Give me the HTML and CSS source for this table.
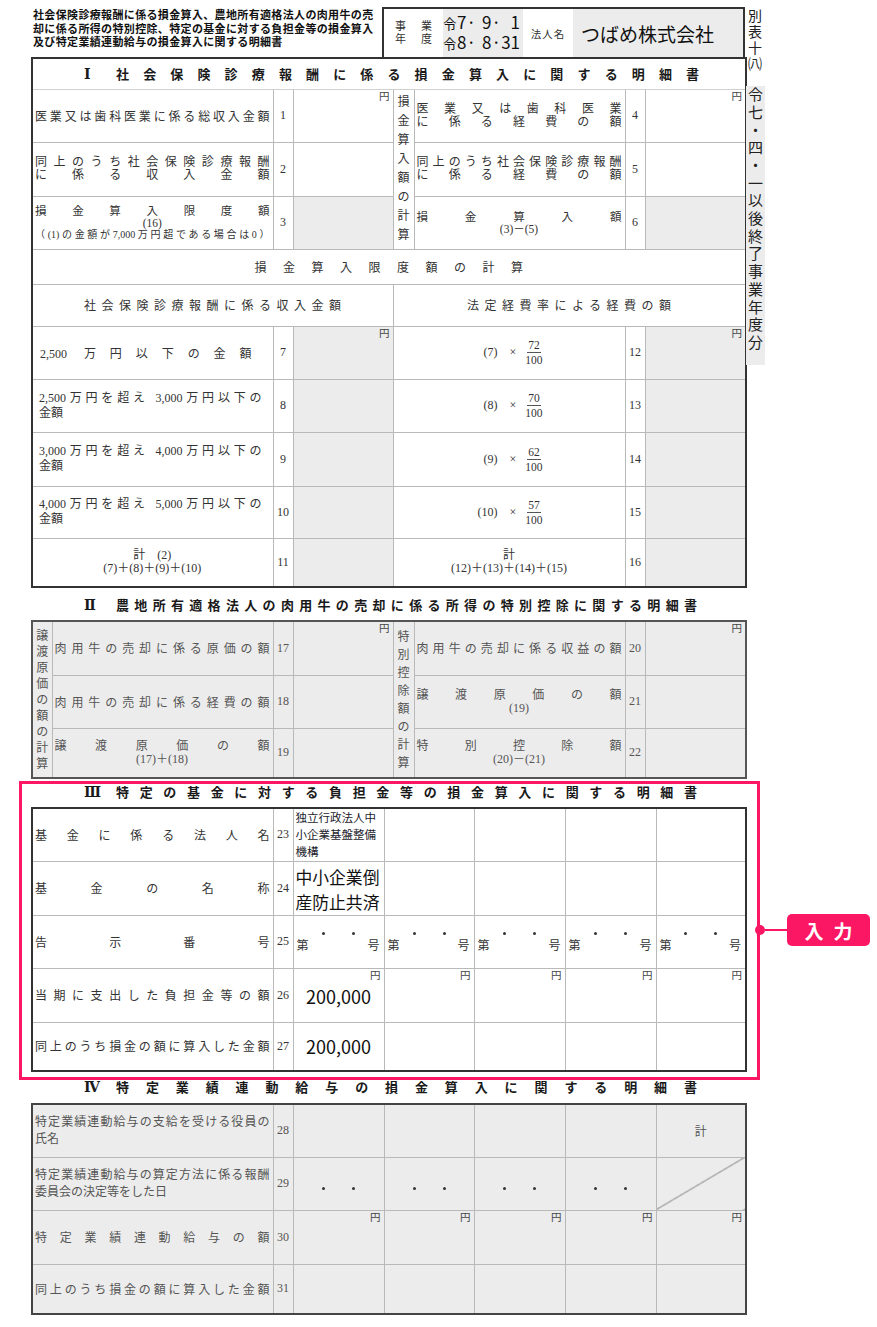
FILE: index.html
```html
<!DOCTYPE html>
<html lang="ja">
<head>
<meta charset="utf-8">
<title>別表十八</title>
<link rel="stylesheet" href="styles.css">
</head>
<body>
<div class="page">
  <div class="top">
    <div class="main">
      <div class="head">
        <div class="head-title">社会保険診療報酬に係る損金算入、農地所有適格法人の肉用牛の売<br>却に係る所得の特別控除、特定の基金に対する負担金等の損金算入<br>及び特定業績連動給与の損金算入に関する明細書</div>
        <div class="head-box">
          <div class="hb-term"><div>事　業</div><div>年　度</div></div>
          <div class="hb-date">
            <div class="dl"><span class="era">令</span><span class="p1">7·</span><span class="p2">9·</span><span class="p3">1</span></div>
            <div class="dl"><span class="era">令</span><span class="p1">8·</span><span class="p2">8·</span><span class="p3">31</span></div>
          </div>
          <div class="hb-lbl">法人名</div>
          <div class="hb-name">つばめ株式会社</div>
        </div>
      </div>

      <table class="t t1">
        <colgroup><col class="w241"><col class="w20"><col class="w100"><col class="w21"><col class="w211"><col class="w20"><col class="w101"></colgroup>
        <tr class="h31">
          <td colspan="7" class="tt"><div class="st st-in"><span class="sn">Ⅰ</span><span class="stx">社会保険診療報酬に係る損金算入に関する明細書</span></div></td>
        </tr>
        <tr class="h53">
          <td class="lab"><div class="j">医業又は歯科医業に係る総収入金額</div></td>
          <td class="no">1</td>
          <td class="amt"><div class="yen">円</div></td>
          <td class="vert v19" rowspan="3">損金算入額の計算</td>
          <td class="lab l13"><div class="j">医業又は歯科医業</div><div class="j">に係る経費の額</div></td>
          <td class="no">4</td>
          <td class="amt"><div class="yen">円</div></td>
        </tr>
        <tr class="h54">
          <td class="lab l13"><div class="j">同上のうち社会保険診療報酬</div><div class="j">に係る収入金額</div></td>
          <td class="no">2</td>
          <td class="amt"></td>
          <td class="lab l13"><div class="j">同上のうち社会保険診療報酬</div><div class="j">に係る経費の額</div></td>
          <td class="no">5</td>
          <td class="amt"></td>
        </tr>
        <tr class="h53">
          <td class="lab l11"><div class="j">損金算入限度額</div><div class="c">(16)</div><div class="j sm">（(1)の金額が7,000万円超である場合は0）</div></td>
          <td class="no">3</td>
          <td class="amt g"></td>
          <td class="lab l11"><div class="j">損金算入額</div><div class="c">(3)－(5)</div></td>
          <td class="no">6</td>
          <td class="amt g"></td>
        </tr>
        <tr class="h35">
          <td colspan="7" class="calc">損金算入限度額の計算</td>
        </tr>
        <tr class="h42">
          <td colspan="3" class="sub">社会保険診療報酬に係る収入金額</td>
          <td colspan="4" class="sub">法定経費率による経費の額</td>
        </tr>
        <tr class="h53">
          <td class="lo1"><div class="j">2,500 万円以下の金額</div></td>
          <td class="no">7</td>
          <td class="amt g"><div class="yen">円</div></td>
          <td colspan="2"><div class="frm"><span class="fa">(7)</span><span class="fx">×</span><span class="frac"><span class="nu">72</span><span class="de">100</span></span></div></td>
          <td class="no">12</td>
          <td class="amt g"><div class="yen">円</div></td>
        </tr>
        <tr class="h53">
          <td class="lo2"><div class="j">2,500万円を超え 3,000万円以下の</div><div>金額</div></td>
          <td class="no">8</td>
          <td class="amt g"></td>
          <td colspan="2"><div class="frm"><span class="fa">(8)</span><span class="fx">×</span><span class="frac"><span class="nu">70</span><span class="de">100</span></span></div></td>
          <td class="no">13</td>
          <td class="amt g"></td>
        </tr>
        <tr class="h54">
          <td class="lo2"><div class="j">3,000万円を超え 4,000万円以下の</div><div>金額</div></td>
          <td class="no">9</td>
          <td class="amt g"></td>
          <td colspan="2"><div class="frm"><span class="fa">(9)</span><span class="fx">×</span><span class="frac"><span class="nu">62</span><span class="de">100</span></span></div></td>
          <td class="no">14</td>
          <td class="amt g"></td>
        </tr>
        <tr class="h52">
          <td class="lo2"><div class="j">4,000万円を超え 5,000万円以下の</div><div>金額</div></td>
          <td class="no">10</td>
          <td class="amt g"></td>
          <td colspan="2"><div class="frm"><span class="fa">(10)</span><span class="fx">×</span><span class="frac"><span class="nu">57</span><span class="de">100</span></span></div></td>
          <td class="no">15</td>
          <td class="amt g"></td>
        </tr>
        <tr class="h49">
          <td class="lab l13 c"><div>計　(2)</div><div>(7)＋(8)＋(9)＋(10)</div></td>
          <td class="no">11</td>
          <td class="amt g"></td>
          <td colspan="2" class="l13 c"><div>計</div><div>(12)＋(13)＋(14)＋(15)</div></td>
          <td class="no">16</td>
          <td class="amt g"></td>
        </tr>
      </table>
    </div>

    <div class="side">
      <div class="bk">別表十㈧</div>
      <div class="era-box">令七・四・一以後終了事業年度分</div>
    </div>
  </div>

  <div class="lower">
    <div class="st st-out st2"><span class="sn">Ⅱ</span><span class="stx">農地所有適格法人の肉用牛の売却に係る所得の特別控除に関する明細書</span></div>
    <table class="t t2">
      <colgroup><col class="w20"><col class="w221"><col class="w20"><col class="w100"><col class="w21"><col class="w211"><col class="w20"><col class="w101"></colgroup>
      <tr class="h54">
        <td class="vert v16" rowspan="3">譲渡原価の額の計算</td>
        <td class="lab"><div class="j">肉用牛の売却に係る原価の額</div></td>
        <td class="no">17</td>
        <td class="amt"><div class="yen">円</div></td>
        <td class="vert v18" rowspan="3">特別控除額の計算</td>
        <td class="lab"><div class="j">肉用牛の売却に係る収益の額</div></td>
        <td class="no">20</td>
        <td class="amt"><div class="yen">円</div></td>
      </tr>
      <tr class="h53">
        <td class="lab"><div class="j">肉用牛の売却に係る経費の額</div></td>
        <td class="no">18</td>
        <td class="amt"></td>
        <td class="lab l13"><div class="j">譲渡原価の額</div><div class="c">(19)</div></td>
        <td class="no">21</td>
        <td class="amt"></td>
      </tr>
      <tr class="h50">
        <td class="lab l13"><div class="j">譲渡原価の額</div><div class="c">(17)＋(18)</div></td>
        <td class="no">19</td>
        <td class="amt"></td>
        <td class="lab l13"><div class="j">特別控除額</div><div class="c">(20)－(21)</div></td>
        <td class="no">22</td>
        <td class="amt"></td>
      </tr>
    </table>

    <div class="frame">
      <div class="st st-out st3"><span class="sn">Ⅲ</span><span class="stx">特定の基金に対する負担金等の損金算入に関する明細書</span></div>
      <table class="t t3">
        <colgroup><col class="w241"><col class="w20"><col class="w91"><col class="w90"><col class="w91"><col class="w91"><col class="w90"></colgroup>
        <tr class="h53">
          <td class="lab"><div class="j">基金に係る法人名</div></td>
          <td class="no">23</td>
          <td><div class="corp">独立行政法人中小企業基盤整備機構</div></td>
          <td></td><td></td><td></td><td></td>
        </tr>
        <tr class="h54">
          <td class="lab"><div class="j">基金の名称</div></td>
          <td class="no">24</td>
          <td><div class="fund">中小企業倒産防止共済</div></td>
          <td></td><td></td><td></td><td></td>
        </tr>
        <tr class="h53">
          <td class="lab"><div class="j">告示番号</div></td>
          <td class="no">25</td>
          <td class="kk"><div class="dots"><span class="dot"></span><span class="dot"></span></div><div class="dh"><span>第</span><span>号</span></div></td>
          <td class="kk"><div class="dots"><span class="dot"></span><span class="dot"></span></div><div class="dh"><span>第</span><span>号</span></div></td>
          <td class="kk"><div class="dots"><span class="dot"></span><span class="dot"></span></div><div class="dh"><span>第</span><span>号</span></div></td>
          <td class="kk"><div class="dots"><span class="dot"></span><span class="dot"></span></div><div class="dh"><span>第</span><span>号</span></div></td>
          <td class="kk"><div class="dots"><span class="dot"></span><span class="dot"></span></div><div class="dh"><span>第</span><span>号</span></div></td>
        </tr>
        <tr class="h54">
          <td class="lab"><div class="j">当期に支出した負担金等の額</div></td>
          <td class="no">26</td>
          <td class="amt"><div class="yen">円</div><div class="val val-top">200,000</div></td>
          <td class="amt"><div class="yen">円</div></td>
          <td class="amt"><div class="yen">円</div></td>
          <td class="amt"><div class="yen">円</div></td>
          <td class="amt"><div class="yen">円</div></td>
        </tr>
        <tr class="h49">
          <td class="lab"><div class="j">同上のうち損金の額に算入した金額</div></td>
          <td class="no">27</td>
          <td><div class="val">200,000</div></td>
          <td></td><td></td><td></td><td></td>
        </tr>
      </table>
      <div class="callout"><span class="cdot"></span><span class="cline"></span><span class="badge">入力</span></div>
    </div>

    <div class="st st-out st4"><span class="sn">Ⅳ</span><span class="stx">特定業績連動給与の損金算入に関する明細書</span></div>
    <table class="t t4">
      <colgroup><col class="w241"><col class="w20"><col class="w91"><col class="w90"><col class="w91"><col class="w91"><col class="w90"></colgroup>
      <tr class="h53">
        <td class="lab l17"><div class="j">特定業績連動給与の支給を受ける役員の</div><div>氏名</div></td>
        <td class="no">28</td>
        <td></td><td></td><td></td><td></td>
        <td class="kei">計</td>
      </tr>
      <tr class="h53">
        <td class="lab l17"><div class="j">特定業績連動給与の算定方法に係る報酬</div><div>委員会の決定等をした日</div></td>
        <td class="no">29</td>
        <td class="dt"><div class="dots"><span class="dot"></span><span class="dot"></span></div></td>
        <td class="dt"><div class="dots"><span class="dot"></span><span class="dot"></span></div></td>
        <td class="dt"><div class="dots"><span class="dot"></span><span class="dot"></span></div></td>
        <td class="dt"><div class="dots"><span class="dot"></span><span class="dot"></span></div></td>
        <td class="diag"></td>
      </tr>
      <tr class="h54">
        <td class="lab"><div class="j">特定業績連動給与の額</div></td>
        <td class="no">30</td>
        <td class="amt"><div class="yen">円</div></td>
        <td class="amt"><div class="yen">円</div></td>
        <td class="amt"><div class="yen">円</div></td>
        <td class="amt"><div class="yen">円</div></td>
        <td class="amt"><div class="yen">円</div></td>
      </tr>
      <tr class="h50">
        <td class="lab"><div class="j">同上のうち損金の額に算入した金額</div></td>
        <td class="no">31</td>
        <td></td><td></td><td></td><td></td><td></td>
      </tr>
    </table>
  </div>
</div>
</body>
</html>
```

FILE: styles.css
```css
* { box-sizing: border-box; }
html, body { margin: 0; padding: 0; background: #fff; }
body {
  width: 877px;
  min-height: 1327px;
  font-family: "Liberation Serif", "Noto Sans CJK JP", serif;
  font-size: 12px;
  color: #333;
}
.page { padding: 7px 0 0 31px; }

/* ---------- top area ---------- */
.top { display: grid; grid-template-columns: 714px 20px; align-items: start; }
.head { display: flex; height: 50px; }
.head-title {
  width: 351px;
  padding: 1px 0 0 2px;
  font-family: "Noto Sans CJK JP", sans-serif;
  font-weight: 700;
  font-size: 11px;
  line-height: 13.5px;
  letter-spacing: 0.35px;
  color: #111;
}
.head-box { flex: 1; display: flex; border: 2px solid #333; border-bottom: 0; }
.hb-term {
  width: 59px;
  display: flex; flex-direction: column; justify-content: center; align-items: center;
  font-size: 11px; line-height: 13px; letter-spacing: 2px; padding-left: 2px;
}
.hb-date {
  width: 80px;
  background: #ececec;
  font-family: "Noto Sans CJK JP", sans-serif;
  font-size: 17px; line-height: 20px; color: #111;
  padding-top: 3px;
}
.dl { display: flex; align-items: baseline; height: 20px; }
.dl .era { width: 14px; font-size: 13.5px; }
.dl .p1 { width: 25px; }
.dl .p2 { width: 14px; }
.dl .p3 { width: 24px; text-align: right; }
.hb-lbl {
  width: 50px; display: flex; align-items: center; justify-content: center;
  font-size: 10.5px; letter-spacing: 1px;
}
.hb-name {
  flex: 1; background: #ececec; display: flex; align-items: center; padding-left: 8px;
  font-family: "Noto Sans CJK JP", sans-serif; font-size: 19px; color: #111;
}

.side { display: flex; flex-direction: column; }
.bk {
  width: 20px; height: 79px;
  font-family: "Noto Sans CJK JP", sans-serif; font-size: 14px; line-height: 16px;
  text-align: center; color: #222; word-break: break-all;
}
.era-box {
  width: 19px; height: 279px; margin-left: 1px;
  background: #ececec;
  writing-mode: vertical-rl;
  font-family: "Noto Sans CJK JP", sans-serif; font-size: 15px; line-height: 19px;
  letter-spacing: 2.7px; padding-top: 1px;
  color: #222;
}

/* ---------- tables ---------- */
.t { border-collapse: collapse; table-layout: fixed; width: 714px; border: 2px solid #333; }
.t td { border: 1px solid #b9b9b9; padding: 0; vertical-align: middle; }
.t td.g { background: #ececec; }
.t2 { border-color: #555; }
.t2 td, .t4 td { background: #ececec; color: #555; }
.t4 { border-color: #444; }

col.w20 { width: 20px; }
col.w21 { width: 21px; }
col.w90 { width: 90px; }
col.w91 { width: 91px; }
col.w100 { width: 100px; }
col.w101 { width: 101px; }
col.w211 { width: 211px; }
col.w221 { width: 221px; }
col.w241 { width: 241px; }

tr.h31 { height: 31px; }
tr.h35 { height: 35px; }
tr.h42 { height: 42px; }
tr.h49 { height: 49px; }
tr.h50 { height: 50px; }
tr.h52 { height: 52px; }
tr.h53 { height: 53px; }
tr.h54 { height: 54px; }

.t td.lab { padding: 0 3px 0 2px; }
.l11 { line-height: 12px; font-size: 11.5px; }
.l13 { line-height: 13px; }
.l17 { line-height: 17px; }
.j { text-align: justify; text-align-last: justify; }
.c { text-align: center; }
.sm { font-size: 10px; }
.no { text-align: center; font-size: 12px; }
.t td.amt { vertical-align: top; }
.yen { text-align: right; font-size: 10.5px; line-height: 12px; padding: 1px 3px 0 0; color: #444; }
.vert { text-align: center; word-break: break-all; font-size: 12px; }
.v16 { line-height: 16px; }
.v18 { line-height: 18px; }
.v19 { line-height: 19px; }

.t td.tt { border-bottom-color: #d0d0d0; }
.t td.calc { text-align: center; letter-spacing: 16.5px; padding-left: 16px; }
.t td.sub { text-align: center; letter-spacing: 5.5px; padding-left: 5px; }
.t td.lo1 { padding: 0 21px 0 7px; }
.t td.lo2 { padding: 0 11px 0 6px; line-height: 15px; }

.frm { display: flex; justify-content: center; align-items: center; padding-right: 8px; }
.fa { width: 30px; text-align: right; }
.fx { margin: 0 9px 0 12px; }
.frac { display: flex; flex-direction: column; align-items: center; font-size: 11.5px; line-height: 12px; }
.frac .nu { border-bottom: 1px solid #555; padding: 0 1px 1px; }
.frac .de { padding-top: 1px; }

/* ---------- section titles ---------- */
.st {
  display: flex; align-items: center;
  font-family: "Noto Sans CJK JP", sans-serif; font-weight: 700; font-size: 13px; line-height: 14px;
  color: #1a1a1a;
}
.sn { width: 32px; font-family: "DejaVu Serif", "Liberation Serif", serif; font-weight: 700; font-size: 14px; }
.stx { flex: 1; text-align: justify; text-align-last: justify; }
.st-in { padding: 0 46px 0 51px; }
.st-out { padding: 0 48px 0 53px; align-items: flex-start; }
.st2 { height: 32px; padding-top: 10px; }
.st3 { height: 23px; padding-top: 1px; }
.st4 { height: 23px; padding-top: 0; }

.lower { width: 714px; }

/* ---------- section III frame ---------- */
.frame {
  position: relative;
  margin: 2px -15px 0 -12px;
  border: 3px solid #fb1763;
  padding: 0 12px 5px 9px;
}
.corp {
  font-family: "Noto Sans CJK JP", sans-serif; font-size: 11.5px; line-height: 17px;
  color: #1c1c2c; padding-left: 2px;
}
.fund {
  font-family: "Noto Sans CJK JP", sans-serif; font-size: 16.8px; line-height: 24.5px;
  color: #111; padding: 3px 0 0 2px;
}
.t td.kk { vertical-align: top; }
.dots { display: flex; justify-content: center; gap: 27px; height: 3px; }
.kk .dots { margin-top: 16px; }
.dt .dots { margin-top: 10px; }
.dot { width: 3px; height: 3px; border-radius: 50%; background: #333; }
.dh { display: flex; justify-content: space-between; margin-top: 4px; line-height: 14px; padding: 0 4px 0 3px; }
.val {
  text-align: center; font-family: "Noto Sans CJK JP", sans-serif; font-size: 18px; line-height: 22px;
  color: #111;
}
.val-top { margin-top: 3px; }

.callout { position: absolute; left: 733px; top: 130px; display: flex; align-items: center; }
.cdot { width: 10px; height: 10px; border-radius: 50%; background: #fb1763; }
.cline { width: 22px; height: 2px; background: #fb1763; }
.badge {
  width: 83px; height: 32px; border-radius: 5px; background: #fb1763;
  display: flex; align-items: center; justify-content: center;
  font-family: "Noto Sans CJK JP", sans-serif; font-weight: 700; font-size: 19px;
  color: #fff; letter-spacing: 10px; padding-left: 10px;
}

/* ---------- section IV ---------- */
.kei { text-align: center; }
.t4 td.diag {
  background-image: linear-gradient(to bottom right, transparent calc(50% - 0.7px), #666 50%, transparent calc(50% + 0.7px));
}
```
